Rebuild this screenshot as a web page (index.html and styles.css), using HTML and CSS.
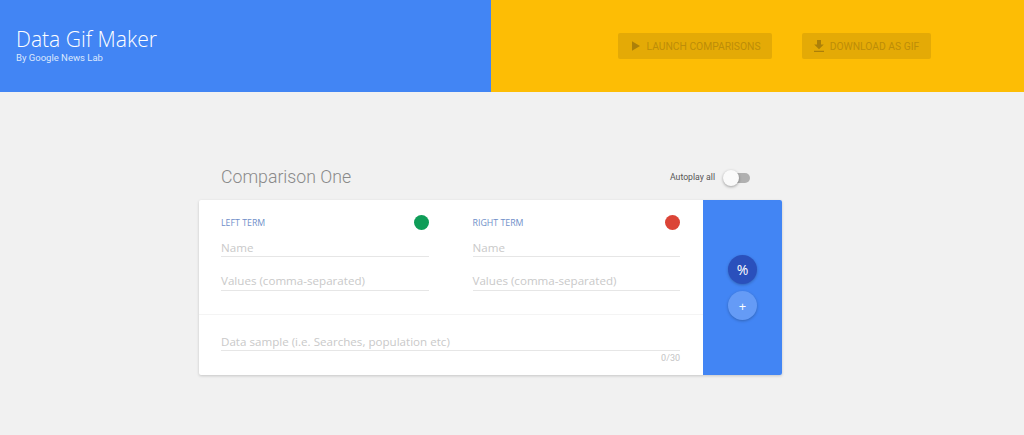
FILE: index.html
```html
<!DOCTYPE html>
<html lang="en">
<head>
  <meta charset="UTF-8">
  <meta name="viewport" content="width=device-width, initial-scale=1.0">
  <title>Data Gif Maker</title>
  <link rel="stylesheet" href="styles.css">
</head>
<body>
  <header class="top">
    <div class="brand">
      <h1>Data Gif Maker</h1>
      <p>By Google News Lab</p>
    </div>
    <div class="actions">
      <button class="action action-launch">
        <svg width="12" height="12" viewBox="0 0 12 12"><path d="M2 1.2v9.6L10 6z"/></svg>
        LAUNCH COMPARISONS
      </button>
      <button class="action action-download">
        <svg width="12" height="14" viewBox="0 0 12 14"><path d="M4 1h4v4.5h2.8L6 10.200 1.200 5.500H4zM1 11.800h10V13H1z"/></svg>
        DOWNLOAD AS GIF
      </button>
    </div>
  </header>

  <main class="comparison">
    <div class="comparison-head">
      <h2>Comparison One</h2>
      <div class="autoplay">
        <span>Autoplay all</span>
        <div class="toggle"><div class="toggle-knob"></div></div>
      </div>
    </div>

    <div class="card">
      <div class="card-form">
        <div class="terms">
          <div class="term">
            <div class="term-head">
              <span class="term-label">LEFT TERM</span>
              <span class="dot dot-green"></span>
            </div>
            <div class="field field-name">Name</div>
            <div class="field field-values">Values (comma-separated)</div>
          </div>
          <div class="term">
            <div class="term-head">
              <span class="term-label">RIGHT TERM</span>
              <span class="dot dot-red"></span>
            </div>
            <div class="field field-name">Name</div>
            <div class="field field-values">Values (comma-separated)</div>
          </div>
        </div>
        <div class="sample">
          <div class="field">Data sample (i.e. Searches, population etc)</div>
          <div class="counter">0/30</div>
        </div>
      </div>
      <div class="card-side">
        <button class="fab fab-percent">%</button>
        <button class="fab fab-add">+</button>
      </div>
    </div>
  </main>
</body>
</html>
```

FILE: styles.css
```css
html, body {
  height: 100%;
}
body {
  margin: 0;
  background-color: #f1f1f1;
  font-family: Roboto, "Liberation Sans", sans-serif;
  overflow: hidden;
}

/* top bar */
.top {
  display: flex;
  height: 92px;
}
.brand {
  width: 491px;
  box-sizing: border-box;
  padding: 26px 16px 0;
  background-color: #4285f4;
  color: #fff;
}
.brand h1 {
  margin: 0;
  font-family: "Open Sans", sans-serif;
  font-size: 21.1px;
  line-height: 25px;
  font-weight: 300;
}
.brand p {
  margin: 0;
  font-size: 9.5px;
  line-height: 13px;
  color: #dce8fd;
}
.actions {
  flex: 1;
  display: flex;
  gap: 29.5px;
  align-items: flex-start;
  padding: 33px 0 0 127px;
  background-color: #fdbd05;
}
.action {
  display: flex;
  align-items: center;
  justify-content: center;
  gap: 5px;
  height: 26px;
  padding: 0;
  border: none;
  border-radius: 2px;
  background-color: #e4aa06;
  color: #bd8d08;
  font-family: Roboto, sans-serif;
  font-size: 10.3px;
  font-weight: 400;
}
.action svg {
  fill: #ac8009;
}
.action-launch {
  width: 154px;
}
.action-download {
  width: 129px;
}

/* comparison block */
.comparison {
  width: 583px;
  margin-left: 199px;
}
.comparison-head {
  display: flex;
  justify-content: space-between;
  align-items: center;
  height: 108px;
  box-sizing: border-box;
  padding: 62px 32px 0 22px;
}
.comparison-head h2 {
  margin: 0;
  font-size: 17.7px;
  font-weight: 300;
  color: #8a8a8a;
}
.autoplay {
  display: flex;
  align-items: center;
  gap: 11px;
  font-size: 8.7px;
  color: #555;
}
.toggle {
  position: relative;
  width: 24px;
  height: 10px;
  margin-top: 1px;
  border-radius: 5px;
  background-color: #b0b0b0;
}
.toggle-knob {
  position: absolute;
  left: -3px;
  top: -3px;
  width: 16px;
  height: 16px;
  border-radius: 50%;
  background-color: #fafafa;
  box-shadow: 0 1px 3px rgba(0, 0, 0, 0.35);
}

.card {
  display: flex;
  height: 175px;
  border-radius: 2px;
  background-color: #fff;
  box-shadow: 0 1px 3px rgba(0, 0, 0, 0.18);
}
.card-form {
  width: 504px;
  display: flex;
  flex-direction: column;
}
.terms {
  display: flex;
  gap: 44px;
  height: 115px;
  box-sizing: border-box;
  padding: 0 22px;
  border-bottom: 1px solid #f4f4f4;
}
.term {
  width: 207.5px;
}
.term-head {
  display: flex;
  justify-content: space-between;
  align-items: center;
  height: 44px;
}
.term-label {
  margin-top: 2px;
  font-family: "Open Sans", sans-serif;
  font-size: 8.8px;
  color: #6f8fc9;
}
.dot {
  width: 15px;
  height: 15px;
  border-radius: 50%;
}
.dot-green {
  background-color: #0f9d58;
}
.dot-red {
  background-color: #db4437;
}
.field {
  box-sizing: border-box;
  border-bottom: 1px solid #e6e6e6;
  font-family: "Open Sans", sans-serif;
  font-size: 11.6px;
  line-height: 16px;
  color: #c9c9c9;
}
.field-name {
  height: 13px;
  line-height: 8px;
}
.field-values {
  height: 21px;
  margin-top: 13px;
  padding-top: 3px;
}
.sample {
  padding: 19px 23px 0 22px;
}
.sample .field {
  height: 17px;
}
.counter {
  margin-top: 2px;
  text-align: right;
  font-size: 9px;
  color: #c4c4c4;
}
.card-side {
  flex: 1;
  display: flex;
  flex-direction: column;
  align-items: center;
  gap: 7px;
  padding-top: 55px;
  border-radius: 0 2px 2px 0;
  background-color: #4285f4;
}
.fab {
  width: 29px;
  height: 29px;
  padding: 0;
  border: none;
  border-radius: 50%;
  color: #fff;
  font-family: "Open Sans", sans-serif;
  box-shadow: 0 1px 3px rgba(0, 0, 0, 0.25);
}
.fab-percent {
  background-color: #2a50bc;
  font-size: 14px;
}
.fab-add {
  background-color: #659bf6;
  font-size: 13px;
}
```
